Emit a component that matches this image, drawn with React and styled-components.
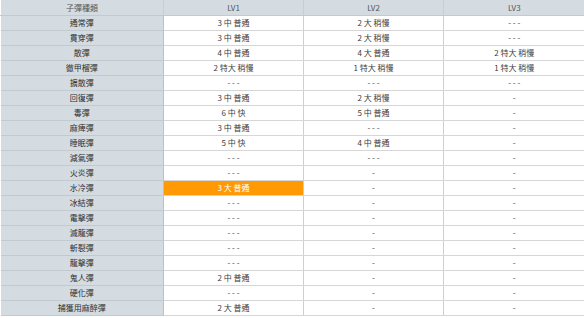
import React from "react";
import styled, { createGlobalStyle } from "styled-components";

const GlobalStyle = createGlobalStyle`
  body {
    margin: 0;
    background: #ffffff;
    font-family: "Noto Sans CJK TC", "Noto Sans", sans-serif;
  }
`;

const Table = styled.table`
  width: 584px;
  border-collapse: collapse;
  table-layout: fixed;
  font-size: 8px;
  color: #3a3a3a;
`;

const HeadCell = styled.th`
  height: 15px;
  padding: 0;
  font-weight: normal;
  color: #555;
  background: #d4dce2;
  border-bottom: 1px solid #c2c9cf;
  border-left: 1px solid ${(p) => (p.$first ? "transparent" : "#c8ced3")};
  text-align: center;
  line-height: 15px;
`;

const NameCell = styled.td`
  height: 14px;
  padding: 0;
  background: #d4dce2;
  border-bottom: 1px solid #c2c9cf;
  border-right: 1px solid #b9c1c7;
  text-align: center;
  line-height: 14px;
  color: #2e2e2e;
`;

const Cell = styled.td`
  height: 14px;
  padding: 0;
  background: ${(p) => (p.$hot ? "#ff9a05" : "#ffffff")};
  color: ${(p) => (p.$hot ? "#ffffff" : "#3c3c3c")};
  border-bottom: 1px solid #d6d6d6;
  border-left: 1px solid #cfcfcf;
  text-align: center;
  line-height: 14px;
`;

const rows = [
  ["通常彈", "3 中 普通", "2 大 稍慢", "- - -"],
  ["貫穿彈", "3 中 普通", "2 大 稍慢", "- - -"],
  ["散彈", "4 中 普通", "4 大 普通", "2 特大 稍慢"],
  ["徹甲榴彈", "2 特大 稍慢", "1 特大 稍慢", "1 特大 稍慢"],
  ["擴散彈", "- - -", "- - -", "- - -"],
  ["回復彈", "3 中 普通", "2 大 稍慢", "-"],
  ["毒彈", "6 中 快", "5 中 普通", "-"],
  ["麻痺彈", "3 中 普通", "- - -", "-"],
  ["睡眠彈", "5 中 快", "4 中 普通", "-"],
  ["減氣彈", "- - -", "- - -", "-"],
  ["火炎彈", "- - -", "-", "-"],
  ["水冷彈", "3 大 普通", "-", "-", true],
  ["冰結彈", "- - -", "-", "-"],
  ["電擊彈", "- - -", "-", "-"],
  ["滅龍彈", "- - -", "-", "-"],
  ["斬裂彈", "- - -", "-", "-"],
  ["龍擊彈", "- - -", "-", "-"],
  ["鬼人彈", "2 中 普通", "-", "-"],
  ["硬化彈", "- - -", "-", "-"],
  ["捕獲用麻醉彈", "2 大 普通", "-", "-"],
];

const App = () => {
  return (
    <>
      <GlobalStyle />
      <Table>
        <colgroup>
          <col style={{ width: 163 }} />
          <col style={{ width: 140 }} />
          <col style={{ width: 140 }} />
          <col style={{ width: 141 }} />
        </colgroup>
        <thead>
          <tr>
            <HeadCell $first>子彈種類</HeadCell>
            <HeadCell>LV1</HeadCell>
            <HeadCell>LV2</HeadCell>
            <HeadCell>LV3</HeadCell>
          </tr>
        </thead>
        <tbody>
          {rows.map(([name, a, b, c, hot]) => (
            <tr key={name}>
              <NameCell>{name}</NameCell>
              <Cell $hot={hot}>{a}</Cell>
              <Cell>{b}</Cell>
              <Cell>{c}</Cell>
            </tr>
          ))}
        </tbody>
      </Table>
    </>
  );
};

export default App;
